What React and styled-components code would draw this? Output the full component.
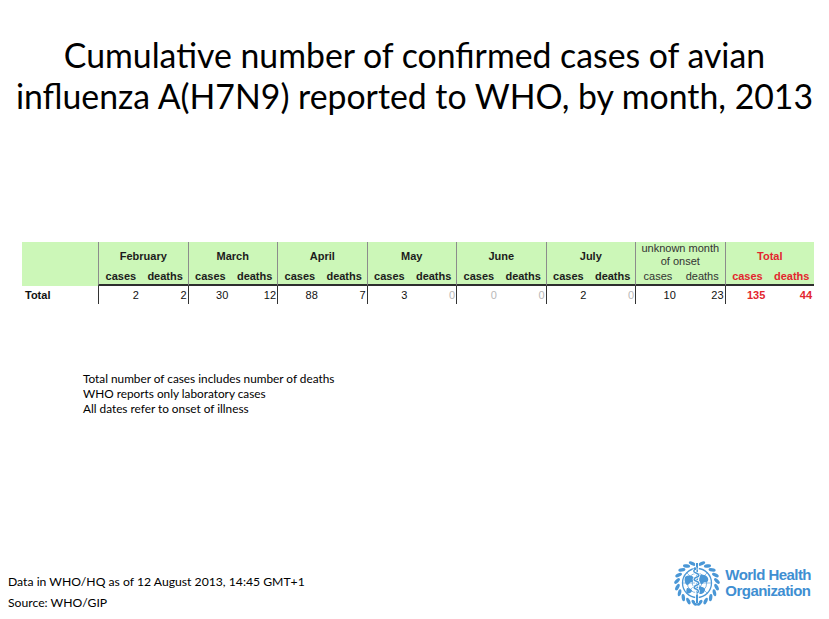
import React from "react";
import styled, { createGlobalStyle } from "styled-components";

const GlobalStyle = createGlobalStyle`
  html, body {
    margin: 0;
    padding: 0;
    background: #ffffff;
  }
`;

const months = ["February", "March", "April", "May", "June", "July"];

const totals = [
  { cases: 2, deaths: 2 },
  { cases: 30, deaths: 12 },
  { cases: 88, deaths: 7 },
  { cases: 3, deaths: 0 },
  { cases: 0, deaths: 0 },
  { cases: 2, deaths: 0 },
];

const unknown = { cases: 10, deaths: 23 };
const grand = { cases: 135, deaths: 44 };

const notes = [
  "Total number of cases includes number of deaths",
  "WHO reports only laboratory cases",
  "All dates refer to onset of illness",
];

export default function App() {
  return (
    <>
      <GlobalStyle />
      <Page>
        <Title>
          Cumulative number of confirmed cases of avian
          <br />
          influenza A(H7N9) reported to WHO, by month, 2013
        </Title>

        <TableWrap>
          <Table>
            <colgroup>
              <col style={{ width: 76 }} />
              {Array.from({ length: 16 }).map((_, i) => (
                <col key={i} style={{ width: 44.75 }} />
              ))}
            </colgroup>
            <thead>
              <tr>
                <GroupHead rowSpan={2} />
                {months.map((m) => (
                  <GroupHead key={m} colSpan={2} $sep>
                    {m}
                  </GroupHead>
                ))}
                <GroupHead colSpan={2} $sep $plain>
                  <UnknownLabel>
                    unknown month
                    <br />
                    of onset
                  </UnknownLabel>
                </GroupHead>
                <GroupHead colSpan={2} $sep $red>
                  Total
                </GroupHead>
              </tr>
              <tr>
                {months.map((m) => (
                  <React.Fragment key={m}>
                    <SubHead $sep>cases</SubHead>
                    <SubHead>deaths</SubHead>
                  </React.Fragment>
                ))}
                <SubHead $sep $plain>cases</SubHead>
                <SubHead $plain>deaths</SubHead>
                <SubHead $sep $red>cases</SubHead>
                <SubHead $red>deaths</SubHead>
              </tr>
            </thead>
            <tbody>
              <tr>
                <RowLabel>Total</RowLabel>
                {totals.map((t, i) => (
                  <React.Fragment key={i}>
                    <Value $sep $pad={4} $zero={t.cases === 0}>
                      {t.cases}
                    </Value>
                    <Value $pad={1} $zero={t.deaths === 0}>
                      {t.deaths}
                    </Value>
                  </React.Fragment>
                ))}
                <Value $sep $pad={4}>{unknown.cases}</Value>
                <Value $pad={1}>{unknown.deaths}</Value>
                <Value $sep $pad={4} $red>{grand.cases}</Value>
                <Value $pad={2} $red>{grand.deaths}</Value>
              </tr>
            </tbody>
          </Table>
        </TableWrap>

        <Notes>
          {notes.map((n) => (
            <div key={n}>{n}</div>
          ))}
        </Notes>

        <Footer>
          <Source>
            <div>Data in WHO/HQ as of 12 August 2013, 14:45 GMT+1</div>
            <div>Source: WHO/GIP</div>
          </Source>
          <Logo>
            <Emblem />
            <LogoText>
              <div>World Health</div>
              <div>Organization</div>
            </LogoText>
          </Logo>
        </Footer>
      </Page>
    </>
  );
}

function Emblem() {
  const cx = 23;
  const cy = 23;
  const leaves = [];
  const steps = 10;
  for (let side = 0; side < 2; side++) {
    for (let i = 0; i < steps; i++) {
      const a = 98 + (i * 158) / (steps - 1);
      const ang = side === 0 ? a : 180 - a;
      const rad = (ang * Math.PI) / 180;
      const r = 20;
      const x = cx + r * Math.cos(rad);
      const y = cy + r * Math.sin(rad);
      const rot = side === 0 ? ang + 90 + 40 : ang - 90 - 40;
      leaves.push(
        <ellipse
          key={`${side}-${i}`}
          cx={x}
          cy={y}
          rx="3.6"
          ry="1.7"
          transform={`rotate(${rot} ${x} ${y})`}
        />
      );
    }
  }
  return (
    <svg width="46" height="46" viewBox="0 0 46 46">
      <g fill="#4a97d6">{leaves}</g>
      <g fill="none" stroke="#4a97d6">
        <circle cx={cx} cy={cy} r="14.5" strokeWidth="1.3" />
        <circle cx={cx} cy={cy} r="9.7" strokeWidth="0.7" />
        <circle cx={cx} cy={cy} r="4.8" strokeWidth="0.7" />
        <path
          d="M23 8.5V37.5M8.5 23H37.5M12.7 12.7L33.3 33.3M33.3 12.7L12.7 33.3"
          strokeWidth="0.6"
        />
      </g>
      <g fill="#4a97d6">
        <path d="M11 17c3-2 7-2 9 1 1 2-1 4-3 4-2 1-2 3-4 3-2-1-3-5-2-8z" />
        <path d="M26 15c3-1 7 0 8 3 1 3-1 5-3 4-2 0-2 3-4 2-2-1-2-5-1-9z" />
        <path d="M24 27c2-1 6 0 7 2 0 3-2 5-5 5-2-1-3-4-2-7z" />
        <path d="M13 28c2 0 5 1 5 3-1 2-3 3-5 2-1-1-1-3 0-5z" />
      </g>
      <path d="M23 3V43" stroke="#ffffff" strokeWidth="3.6" />
      <path d="M23 3V43" stroke="#4a97d6" strokeWidth="2" />
      <path
        d="M22 9c-3 1-3 3 0 4s4 3 1 4-4 3-1 4 4 3 1 4-4 3-1 4 3 3 1 4"
        fill="none"
        stroke="#ffffff"
        strokeWidth="3"
        strokeLinecap="round"
      />
      <path
        d="M22 9c-3 1-3 3 0 4s4 3 1 4-4 3-1 4 4 3 1 4-4 3-1 4 3 3 1 4"
        fill="none"
        stroke="#4a97d6"
        strokeWidth="1.5"
        strokeLinecap="round"
      />
      <circle cx="21" cy="8.5" r="1.3" fill="#4a97d6" />
    </svg>
  );
}

const Page = styled.div`
  width: 829px;
  height: 619px;
  display: flex;
  flex-direction: column;
  box-sizing: border-box;
  padding-top: 35px;
  font-family: Lato, "Open Sans", sans-serif;
  color: #000;
  overflow: hidden;
`;

const Title = styled.h1`
  margin: 0;
  font-family: Lato, "Open Sans", sans-serif;
  font-weight: 400;
  font-size: 33.8px;
  line-height: 41px;
  text-align: center;
`;

const TableWrap = styled.div`
  margin-top: 125px;
  padding-left: 22px;
`;

const Table = styled.table`
  width: 792px;
  table-layout: fixed;
  border-collapse: separate;
  border-spacing: 0;
  font-family: "Liberation Sans", Arial, sans-serif;
  font-size: 11px;
`;

const headColor = (p) => (p.$red ? "#e3262e" : p.$plain ? "#333" : "#1c1c1c");

const GroupHead = styled.th`
  height: 24px;
  padding: 0 0 3px;
  box-sizing: border-box;
  background: #ccf7b8;
  border-left: ${(p) => (p.$sep ? "1px solid #8c8c8c" : "none")};
  color: ${headColor};
  font-weight: ${(p) => (p.$plain ? 400 : 700)};
  line-height: 14px;
  text-align: center;
  vertical-align: bottom;
  white-space: nowrap;
`;

const UnknownLabel = styled.div`
  height: 21px;
  line-height: 13px;
  margin-top: -3px;
  overflow: visible;
`;

const SubHead = styled.th`
  height: 20px;
  padding: 2px 0 0;
  box-sizing: border-box;
  background: #ccf7b8;
  border-left: ${(p) => (p.$sep ? "1px solid #8c8c8c" : "none")};
  border-bottom: 2px solid #2e2e2e;
  color: ${headColor};
  font-weight: ${(p) => (p.$plain ? 400 : 700)};
  line-height: 14px;
  text-align: center;
  vertical-align: middle;
  white-space: nowrap;
`;

const RowLabel = styled.td`
  height: 18px;
  padding: 0 0 0 3px;
  font-weight: 700;
  color: #111;
  line-height: 14px;
  vertical-align: middle;
`;

const Value = styled.td`
  height: 18px;
  padding: 0 ${(p) => p.$pad}px 0 0;
  border-left: ${(p) => (p.$sep ? "1px solid #333" : "none")};
  color: ${(p) => (p.$red ? "#e3262e" : p.$zero ? "#b8b8b8" : "#111")};
  font-weight: ${(p) => (p.$red ? 700 : 400)};
  line-height: 14px;
  text-align: right;
  vertical-align: middle;
`;

const Notes = styled.div`
  margin-top: 67px;
  padding-left: 83px;
  font-size: 11.8px;
  line-height: 15px;
`;

const Footer = styled.div`
  margin-top: auto;
  display: flex;
  justify-content: space-between;
  align-items: flex-end;
  padding: 0 18px 6px 8px;
`;

const Source = styled.div`
  font-size: 12.2px;
  line-height: 21px;
`;

const Logo = styled.div`
  display: flex;
  align-items: center;
  gap: 5px;
  margin-bottom: 7px;
`;

const LogoText = styled.div`
  font-family: "Liberation Sans", Arial, sans-serif;
  font-weight: 700;
  font-size: 15px;
  line-height: 16px;
  color: #3f8fd2;
  letter-spacing: -0.55px;
`;
